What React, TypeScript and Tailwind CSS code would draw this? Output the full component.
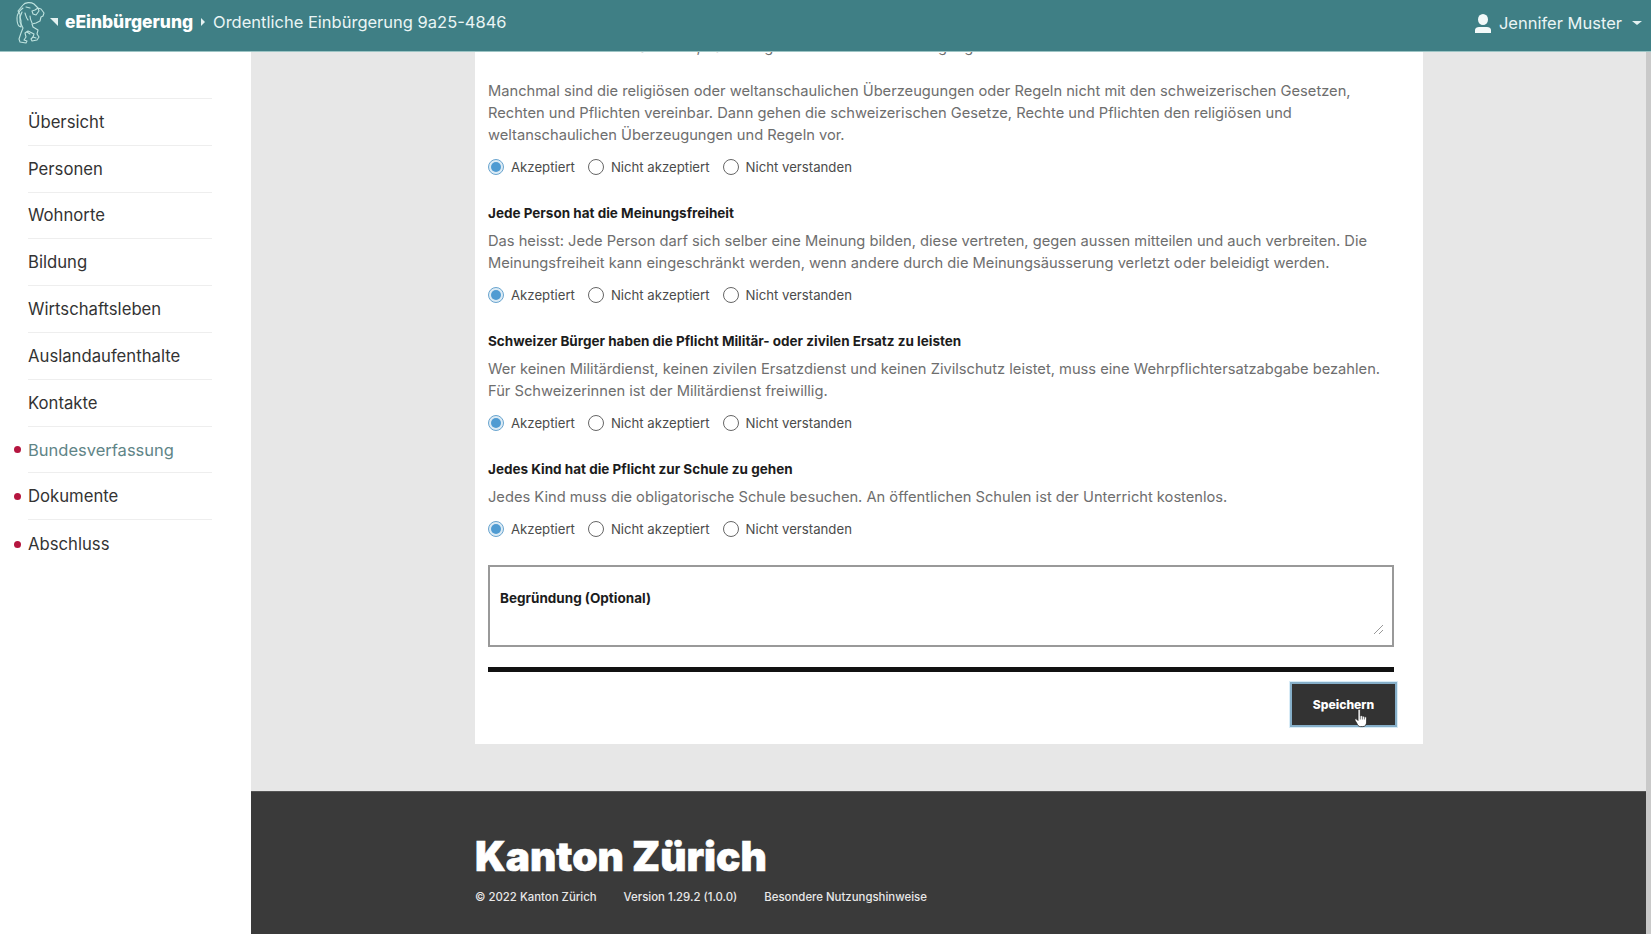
import * as React from "react";

const navItems = [
  { label: "Übersicht" },
  { label: "Personen" },
  { label: "Wohnorte" },
  { label: "Bildung" },
  { label: "Wirtschaftsleben" },
  { label: "Auslandaufenthalte" },
  { label: "Kontakte" },
  { label: "Bundesverfassung", dot: true, active: true },
  { label: "Dokumente", dot: true },
  { label: "Abschluss", dot: true },
];

const questions = [
  {
    title: "Jede Person hat die Meinungsfreiheit",
    lines: [
      "Das heisst: Jede Person darf sich selber eine Meinung bilden, diese vertreten, gegen aussen mitteilen und auch verbreiten. Die",
      "Meinungsfreiheit kann eingeschränkt werden, wenn andere durch die Meinungsäusserung verletzt oder beleidigt werden.",
    ],
  },
  {
    title: "Schweizer Bürger haben die Pflicht Militär- oder zivilen Ersatz zu leisten",
    lines: [
      "Wer keinen Militärdienst, keinen zivilen Ersatzdienst und keinen Zivilschutz leistet, muss eine Wehrpflichtersatzabgabe bezahlen.",
      "Für Schweizerinnen ist der Militärdienst freiwillig.",
    ],
  },
  {
    title: "Jedes Kind hat die Pflicht zur Schule zu gehen",
    lines: ["Jedes Kind muss die obligatorische Schule besuchen. An öffentlichen Schulen ist der Unterricht kostenlos."],
  },
];

function Radio({ label, checked }: { label: string; checked?: boolean }) {
  return (
    <span className="flex items-center gap-[7px]">
      {checked ? (
        <span className="flex size-[16px] items-center justify-center rounded-full border border-[#6aa5cf] bg-[#dcebf5]">
          <span className="size-[10px] rounded-full bg-[#4f9bd2]" />
        </span>
      ) : (
        <span className="size-[16px] rounded-full border-[1.5px] border-[#666]" />
      )}
      <span>{label}</span>
    </span>
  );
}

function RadioRow() {
  return (
    <div className="flex h-[20px] items-center gap-[13px] text-[13.2px] text-[#4b4b4b]">
      <Radio label="Akzeptiert" checked />
      <Radio label="Nicht akzeptiert" />
      <Radio label="Nicht verstanden" />
    </div>
  );
}

function LionLogo() {
  return (
    <svg width="31" height="43" viewBox="0 0 31 43" fill="none" stroke="#bfe3df" strokeWidth="1.1" strokeLinejoin="round" strokeLinecap="round" aria-hidden>
      <path d="M8 4c2-3 8-3 11-1l4 4-3 2-3 1 1 3 3 1 3-4-1-3 3 1 3 4-1 3-2 1-1 4-4 2-4 1 1 3 5 3-1 4 2 3-2 3-5 1-1-2 2-2 1-3-6-3-3 2 1 4-2 3 3 1-1 2-6-1-1-3 2-6 2-5-3-6 0-8-2-3z" />
      <path d="M8 7c-4 3-6 7-6 10s0 6 2 8l2 1 0-6-1-4 2-5M11 6l4 1M10 12c1 3 1 5 3 7M15 15c0 3 1 5 2 7M12 31l3 2M18 36l3 1" />
    </svg>
  );
}

function HandCursor() {
  return (
    <svg width="15" height="20" viewBox="0 0 15 20" className="absolute left-[62px] top-[24px]" aria-hidden>
      <path
        d="M4.200 1.800c.7-.9 2.100-.5 2.100.8v5.400c.3-.6 1.800-.6 2.100.3.500-.5 1.800-.3 2 .6.700-.4 2.200 0 2.200 1.200v4c0 2.600-1.500 4.500-3.800 4.500H6.500c-1.300 0-2.200-.7-2.900-1.900L1 12.300c-.6-1 .6-2.100 1.600-1.200l1.400 1.400V2.800c0-.4 0-.7.200-1z"
        fill="#fff"
        stroke="#222"
        strokeWidth="0.8"
      />
      <path d="M6.300 8v3.500M8.400 8.300v3.200M10.400 9v2.500" stroke="#444" strokeWidth="0.7" fill="none" />
    </svg>
  );
}

export default function App() {
  return (
    <div className="flex h-[934px] w-[1651px] flex-col overflow-hidden bg-white font-['Inter',sans-serif]">
      <header className="z-10 flex h-[52px] shrink-0 items-start justify-between border-b border-[#9cc4c4] bg-[#3f7f85] pl-[15px] pr-[9px] text-[#eaf5f5]">
        <div className="flex items-start">
          <div className="mt-[1px]">
            <LionLogo />
          </div>
          <span className="ml-[4px] mt-[18px] h-0 w-0 border-l-[8px] border-t-[8px] border-l-transparent border-t-[#e4f1f1]" />
          <span className="ml-[7px] mt-[11px] text-[17.4px] font-extrabold leading-[22px] text-white">eEinbürgerung</span>
          <span className="ml-[8px] mt-[18px] h-0 w-0 border-y-[4px] border-l-[4px] border-y-transparent border-l-[#e4f1f1]" />
          <span className="ml-[8px] mt-[11px] text-[16.5px] leading-[22px]">Ordentliche Einbürgerung 9a25-4846</span>
        </div>
        <div className="flex items-center pt-[12px]">
          <svg width="16" height="19" viewBox="0 0 16 19" fill="#f3f9f9" aria-hidden>
            <ellipse cx="8" cy="5.500" rx="5" ry="5.500" />
            <path d="M0 19v-3c0-2 2-3 4-3h8c2 0 4 1 4 3v3z" />
          </svg>
          <span className="ml-[8px] text-[16.5px] leading-[22px]">Jennifer Muster</span>
          <span className="ml-[10px] h-0 w-0 border-x-[5px] border-t-[4px] border-x-transparent border-t-[#e4f1f1]" />
        </div>
      </header>

      <div className="flex min-h-0 flex-1">
        <nav className="w-[251px] shrink-0 bg-white pl-[28px] pr-[39px] pt-[46px]">
          <ul className="divide-y divide-[#eeeeee] border-t border-[#eeeeee]">
            {navItems.map((item) => (
              <li key={item.label} className="relative flex h-[46.800px] items-center pt-[1px] text-[16.700px] text-[#333]">
                {item.dot ? <span className="absolute left-[-14px] size-[7px] rounded-full bg-[#b5153f]" /> : null}
                <span className={item.active ? "text-[16.500px] text-[#5f8587]" : ""}>{item.label}</span>
              </li>
            ))}
          </ul>
        </nav>

        <div className="flex min-w-0 flex-1 flex-col bg-[#e7e7e7]">
          <main className="h-[692px] shrink-0 overflow-hidden pl-[224px] pr-[223px]">
            <section className="h-[708px] whitespace-nowrap bg-white pl-[13px] pr-[29px] text-[14.680px] leading-[22px] text-[#6e6e6e]">
              <p className="mt-[-16px]">Alle Menschen in der Schweiz, haben eigene Werte und Überzeugungen.</p>
              <p className="mt-[22px]">Manchmal sind die religiösen oder weltanschaulichen Überzeugungen oder Regeln nicht mit den schweizerischen Gesetzen,</p>
              <p>Rechten und Pflichten vereinbar. Dann gehen die schweizerischen Gesetze, Rechte und Pflichten den religiösen und</p>
              <p>weltanschaulichen Überzeugungen und Regeln vor.</p>
              <div className="mt-[11px]">
                <RadioRow />
              </div>
              {questions.map((q) => (
                <div key={q.title} className="mt-[26px]">
                  <h3 className="text-[13.500px] font-bold leading-[20px] text-[#1c1c1c]">{q.title}</h3>
                  <div className="mt-[7px]">
                    {q.lines.map((line) => (
                      <p key={line}>{line}</p>
                    ))}
                  </div>
                  <div className="mt-[11px]">
                    <RadioRow />
                  </div>
                </div>
              ))}
              <div className="relative mt-[26px] h-[82px] border-2 border-[#999] bg-white px-[10px] pt-[21px]">
                <label className="block text-[13.500px] font-bold leading-[20px] text-[#1c1c1c]">Begründung (Optional)</label>
                <svg width="9" height="9" viewBox="0 0 9 9" className="absolute bottom-[11px] right-[9px]" stroke="#999" aria-hidden>
                  <path d="M0 9L9 0M5 9L9 5" />
                </svg>
              </div>
              <div className="mt-[20px] h-[5px] bg-[#111]" />
              <div className="mr-[-3px] mt-[10px] flex justify-end">
                <button type="button" className="relative h-[45px] w-[107px] border-2 border-[#86afc9] bg-[#333] outline outline-1 outline-[#d9ecf7]">
                  <span className="text-[12.100px] font-extrabold text-white">Speichern</span>
                  <HandCursor />
                </button>
              </div>
            </section>
          </main>
          <div className="h-[47px] shrink-0" />
          <footer className="flex-1 border-t border-[#555] bg-[#3a3a3a] pl-[224px] text-white">
            <div className="pt-[42px] text-[40.600px] font-black leading-[46px] [-webkit-text-stroke:0.6px_white]">Kanton Zürich</div>
            <div className="mt-[9px] flex gap-[27px] text-[11.400px] font-medium text-[#e8e8e8]">
              <span>© 2022 Kanton Zürich</span>
              <span>Version 1.29.2 (1.0.0)</span>
              <span>Besondere Nutzungshinweise</span>
            </div>
          </footer>
        </div>
        <div className="w-[5px] shrink-0 bg-[#c9c9c9]" />
      </div>
    </div>
  );
}
